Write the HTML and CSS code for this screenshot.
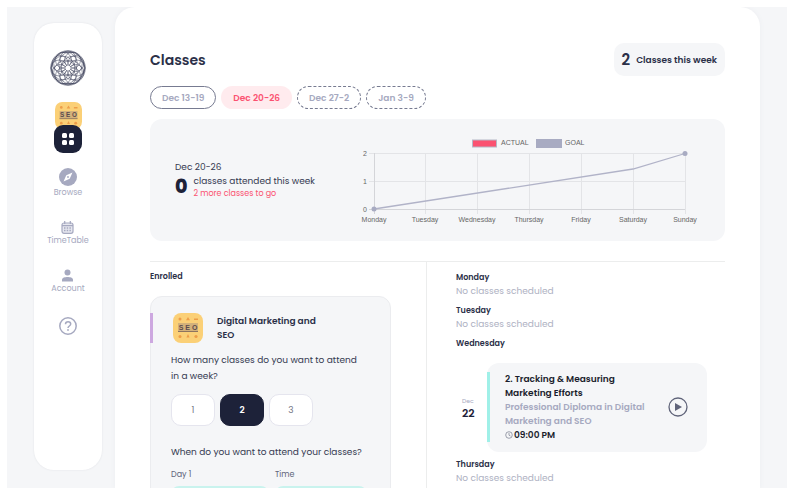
FILE: index.html
```html
<!DOCTYPE html>
<html lang="en">
<head>
<meta charset="utf-8">
<meta name="viewport" content="width=device-width, initial-scale=1">
<title>Classes</title>
<link rel="stylesheet" href="styles.css">
</head>
<body>
<svg class="defs" aria-hidden="true">
  <symbol id="seo" viewBox="0 0 30 30">
    <rect width="30" height="30" rx="8" fill="#fbd077"/>
    <g fill="#ed9d49"><circle cx="7" cy="6" r="1.5"/><path d="M15 4l2 3.2h-4zM21 5.500h4v1.600h-4z"/><circle cx="7" cy="23.500" r="1.500"/><path d="M15 21l1.600 3.500h-3.200z"/><circle cx="23" cy="23.500" r="1.600"/></g>
    <rect x="5" y="10" width="20" height="8.500" fill="#d3b17a"/>
    <path d="M5 18.500h20" stroke="#8d7460"/>
  </symbol>
</svg>
<div class="app">
  <nav class="sidebar" aria-label="Main">
    <svg class="logo" viewBox="-18 -18 36 36" role="img" aria-label="Home">
      <g fill="none" stroke="#343852" stroke-width=".5">
        <circle r="17.300"/><circle r="16.300"/>
        <circle cx="9" cy="0" r="8"/><circle cx="7.800" cy="4.500" r="8"/><circle cx="4.500" cy="7.800" r="8"/><circle cx="0" cy="9" r="8"/><circle cx="-4.500" cy="7.800" r="8"/><circle cx="-7.800" cy="4.500" r="8"/><circle cx="-9" cy="0" r="8"/><circle cx="-7.800" cy="-4.500" r="8"/><circle cx="-4.500" cy="-7.800" r="8"/><circle cx="0" cy="-9" r="8"/><circle cx="4.500" cy="-7.800" r="8"/><circle cx="7.800" cy="-4.500" r="8"/>
        <circle cx="5" cy="0" r="11.800"/><circle cx="2.500" cy="4.300" r="11.800"/><circle cx="-2.500" cy="4.300" r="11.800"/><circle cx="-5" cy="0" r="11.800"/><circle cx="-2.500" cy="-4.300" r="11.800"/><circle cx="2.500" cy="-4.300" r="11.800"/>
      </g>
      <circle r="2.500" fill="#fff"/>
    </svg>
    <a class="course" href="#" aria-label="SEO course"><svg viewBox="0 0 30 30"><use href="#seo"/><text x="15" y="17" text-anchor="middle" class="seo-text">S E O</text></svg></a>
    <a class="home" href="#" aria-label="Dashboard">
      <svg viewBox="0 0 12 12" fill="#fff"><rect x="0" y="0" width="5" height="5" rx="1.500"/><rect x="7" y="0" width="5" height="5" rx="1.500"/><rect x="0" y="7" width="5" height="5" rx="1.500"/><rect x="7" y="7" width="5" height="5" rx="1.500"/></svg>
    </a>
    <div class="links">
      <a href="#">
        <svg class="icon-large" viewBox="0 0 18 18"><circle cx="9" cy="9" r="9" fill="#a6a9c0"/><path d="M13.500 4.500L10.700 10.700 4.500 13.500 7.300 7.300z" fill="#fff"/><circle cx="9" cy="9" r=".9" fill="#a6a9c0"/></svg>
        <span>Browse</span>
      </a>
      <a href="#">
        <svg class="icon-small" viewBox="0 0 13 13" fill="none" stroke="#a6a9c0" stroke-width="1.200"><rect x="1" y="2" width="11" height="10.300" rx="2" fill="#e6e7ef"/><path d="M1 4.700h11M3.700 0v3M9.300 0v3"/><path d="M3 7h7M3 9.600h7" stroke-width="1.500" stroke-dasharray="1.500 1.200"/></svg>
        <span>TimeTable</span>
      </a>
      <a href="#">
        <svg class="icon-small" viewBox="0 0 13 13" fill="#a6a9c0"><circle cx="6.500" cy="3.500" r="3"/><path d="M1 12.500v-1.700C1 8.700 4 8 6.500 8s5.500.7 5.500 2.800v1.700z"/></svg>
        <span>Account</span>
      </a>
      <a href="#" aria-label="Help">
        <svg class="icon-large" viewBox="0 0 18 18" fill="none" stroke="#a6a9c0" stroke-width="1.500"><circle cx="9" cy="9" r="8.200"/><path d="M6.500 7.200C6.500 3.800 11.700 4 11.700 7c0 2-2.700 2-2.700 4"/><circle cx="9" cy="13" r=".9" fill="#a6a9c0" stroke="none"/></svg>
      </a>
    </div>
  </nav>

  <main class="main">
    <header class="header">
      <h1>Classes</h1>
      <div class="summary"><strong>2</strong><span>Classes this week</span></div>
    </header>
    <div class="weeks">
      <button class="week past">Dec 13-19</button>
      <button class="week current">Dec 20-26</button>
      <button class="week">Dec 27-2</button>
      <button class="week">Jan 3-9</button>
    </div>

    <section class="progress">
      <div class="attendance">
        <p>Dec 20-26</p>
        <div class="count">
          <strong>0</strong>
          <div><p>classes attended this week</p><p class="remaining">2 more classes to go</p></div>
        </div>
      </div>
      <svg class="chart" viewBox="0 0 350 100" role="img" aria-label="Actual and goal classes by day">
        <rect x="116.500" y="10" width="24" height="7" fill="#fb5271" stroke="#b5b7c6"/>
        <text x="145" y="15">ACTUAL</text>
        <rect x="180" y="9" width="26" height="9" fill="#a8abc2"/>
        <text x="209" y="15">GOAL</text>
        <path d="M13 23.500H329M13 51.500H329M69.500 23v61M121.500 23v61M173.500 23v61M225.500 23v61M277.500 23v61M329.500 23v61" stroke="#e3e4e7" fill="none"/>
        <path d="M13 79.500H329M18.500 23v61" stroke="#d4d5d9" fill="none"/>
        <path d="M18 79L277 39 329 23.500" stroke="#b1b3c8" stroke-width="1.300" fill="none"/>
        <circle cx="18" cy="79" r="2.500" fill="#a8abc2"/><circle cx="329" cy="23.500" r="2.500" fill="#a8abc2"/>
        <g text-anchor="end"><text x="11" y="26">2</text><text x="11" y="54">1</text><text x="11" y="82">0</text></g>
        <g text-anchor="middle"><text x="18" y="92">Monday</text><text x="69" y="92">Tuesday</text><text x="121" y="92">Wednesday</text><text x="173" y="92">Thursday</text><text x="225" y="92">Friday</text><text x="277" y="92">Saturday</text><text x="329" y="92">Sunday</text></g>
      </svg>
    </section>

    <div class="columns">
      <section class="enrolled">
        <h2>Enrolled</h2>
        <article class="enrolment">
          <div class="course-title">
            <svg viewBox="0 0 30 30" aria-hidden="true"><use href="#seo"/><text x="15" y="17" text-anchor="middle" class="seo-text">S E O</text></svg>
            <h3>Digital Marketing and SEO</h3>
          </div>
          <p class="question">How many classes do you want to attend in a week?</p>
          <div class="amounts"><button>1</button><button class="selected">2</button><button>3</button></div>
          <p class="question">When do you want to attend your classes?</p>
          <div class="slots">
            <div><label for="day">Day 1</label><select id="day"><option></option></select></div>
            <div><label for="time">Time</label><select id="time"><option></option></select></div>
          </div>
        </article>
      </section>
      <section class="schedule">
        <div class="day"><h2>Monday</h2><p>No classes scheduled</p></div>
        <div class="day"><h2>Tuesday</h2><p>No classes scheduled</p></div>
        <div class="day"><h2>Wednesday</h2>
          <div class="event">
            <div class="date"><span>Dec</span><strong>22</strong></div>
            <article class="lesson">
              <div class="lesson-text">
                <h3>2. Tracking &amp; Measuring Marketing Efforts</h3>
                <p>Professional Diploma in Digital Marketing and SEO</p>
                <div class="time"><svg viewBox="0 0 8 8" fill="none" stroke="#777b8d" stroke-width=".7"><circle cx="4" cy="4" r="3.300"/><path d="M4 2v2.200l1.500.8"/></svg><time>09:00 PM</time></div>
              </div>
              <button class="play" aria-label="Play class"><svg viewBox="0 0 20 20"><circle cx="10" cy="10" r="9" fill="none" stroke="#60647a" stroke-width="1.300"/><path d="M7 6v8l7-4z" fill="#60647a"/></svg></button>
            </article>
          </div>
        </div>
        <div class="day"><h2>Thursday</h2><p>No classes scheduled</p></div>
      </section>
    </div>
  </main>
</div>
</body>
</html>
```
FILE: styles.css
```css
* { box-sizing: border-box; }
body {
  margin: 0;
  height: 100vh;
  padding: 7px 3px 4px 7px;
  overflow: hidden;
  background: #fff;
  color: #343950;
  font: 9px/14px Poppins, Inter, "Open Sans", sans-serif;
}
h1, h2, h3, p { margin: 0; }
h1, h2, h3, .summary { color: #2b3048; }
h2 { font-size: 8px; line-height: 14px; font-weight: 600; }
h3 { font-size: 9px; line-height: 14px; font-weight: 600; }
button, select { font: inherit; color: inherit; }
button { padding: 0; cursor: pointer; }
a { color: inherit; text-decoration: none; }
svg { display: block; }
.defs { position: absolute; width: 0; height: 0; }
.seo-text { font: 700 7px "Liberation Sans", sans-serif; fill: #5c4b4d; }
.app {
  display: flex;
  gap: 13px;
  height: 100%;
  padding: 0 27px;
  overflow: hidden;
  background: #f5f6f8;
}
.sidebar {
  display: flex;
  flex: 0 0 68px;
  flex-direction: column;
  align-items: center;
  margin: 16px 0 18px;
  padding-top: 27px;
  border-radius: 20px;
  background: #fff;
  box-shadow: 0 0 2px #dfe0e5;
}
.logo { width: 36px; height: 36px; margin-bottom: 16px; }
.course svg { width: 27px; height: 27px; }
.home {
  display: grid;
  place-items: center;
  width: 28px;
  height: 28px;
  margin: -4px 0 15px;
  border-radius: 9px;
  background: #1d2239;
}
.home svg { width: 12px; height: 12px; }
.links { display: flex; flex-direction: column; gap: 23px; }
.links a {
  display: flex;
  flex-direction: column;
  align-items: center;
  gap: 1px;
  color: #a6a9c0;
  font-size: 8px;
  line-height: 11px;
}
.icon-large { width: 18px; height: 18px; }
.icon-small { width: 13px; height: 13px; }
.main {
  flex: 1;
  min-width: 0;
  padding: 36px 35px 0;
  border-radius: 20px 20px 0 0;
  background: #fff;
  box-shadow: 0 0 5px #eceef1;
}
.header { display: flex; align-items: center; justify-content: space-between; }
h1 { font-size: 14px; line-height: 20px; font-weight: 600; }
.summary {
  display: flex;
  align-items: center;
  gap: 6px;
  height: 33px;
  padding: 0 8px;
  border-radius: 10px;
  background: #f5f6f8;
  font-weight: 600;
}
.summary strong { font-size: 15px; font-weight: 600; }
.weeks { display: flex; gap: 5px; margin: 10px 0; }
.week {
  height: 23px;
  padding: 0 11px;
  border: 1px dashed #777b91;
  border-radius: 12px;
  background: #fff;
  color: #a6a9c0;
  font-weight: 600;
}
.past { border-style: solid; }
.current { border-color: #ffebee; background: #ffebee; color: #fb5271; }
.progress {
  display: flex;
  align-items: center;
  min-height: 122px;
  padding: 0 19px 0 25px;
  border-radius: 12px;
  background: #f5f6f8;
}
.attendance { flex: 0 0 181px; }
.count { display: flex; align-items: center; gap: 6px; }
.count strong { font-size: 19px; line-height: 24px; font-weight: 800; color: #1d2239; }
.remaining { font-size: 8px; line-height: 12px; color: #fb5271; }
.chart { flex: 1; min-width: 0; }
.chart text { font: 7px "Liberation Sans", Arial, sans-serif; fill: #666; }
.columns {
  display: grid;
  grid-template-columns: 277fr 298fr;
  margin-top: 20px;
  border-top: 1px solid #eceded;
}
.enrolled { padding: 8px 35px 0 0; border-right: 1px solid #eceded; }
.enrolment {
  margin-top: 12px;
  padding: 16px 19px 16px 20px;
  border: 1px solid #ebecef;
  border-radius: 12px;
  background: #f5f6f8;
  line-height: 16px;
}
.course-title {
  display: flex;
  align-items: center;
  gap: 14px;
  margin: 0 0 9px -21px;
  padding-left: 20px;
  border-left: 3px solid #cda8e0;
}
.course-title svg { width: 30px; height: 30px; }
.course-title h3 { max-width: 112px; }
.question { max-width: 195px; }
.amounts { display: flex; gap: 5px; margin: 10px 0 18px; }
.amounts button {
  width: 44px;
  height: 32px;
  border: 1px solid #e5e5ee;
  border-radius: 10px;
  background: #fff;
  color: #777a87;
}
.amounts .selected { border-color: #1d2239; background: #1d2239; color: #fff; font-weight: 600; }
.slots { display: grid; grid-template-columns: 98fr 92fr; gap: 6px; margin-top: 8px; padding-right: 4px; }
.slots label { display: block; font-size: 8px; line-height: 14px; color: #60647a; }
.slots select {
  display: block;
  width: 100%;
  height: 28px;
  margin-top: 4px;
  appearance: none;
  border: 2px solid #c9f3ee;
  border-radius: 8px;
  background: #fff;
}
.schedule { padding: 9px 18px 0 29px; }
.day { margin-bottom: 6px; }
.day > p { line-height: 13px; color: #aeb1c2; }
.event { display: flex; align-items: center; margin-top: 12px; }
.date { display: flex; flex: 0 0 31px; flex-direction: column; padding-left: 6px; }
.date span { font-size: 6px; line-height: 10px; color: #a6a9c0; }
.date strong { font-size: 11px; font-weight: 600; color: #1d2239; }
.lesson {
  display: flex;
  flex: 1;
  align-items: center;
  justify-content: space-between;
  padding: 9px 19px 10px 0;
  border-radius: 12px;
  background: #f5f6f8;
}
.lesson-text {
  flex: 0 0 170px;
  padding-left: 15px;
  border-left: 3px solid #a0f0e8;
  font-weight: 600;
  color: #a6a9c0;
}
.lesson h3, .time { color: #1a1d2c; }
.lesson h3 { max-width: 130px; }
.time { display: flex; align-items: center; gap: 1px; }
.time svg { width: 8px; height: 8px; }
.play { border: 0; background: none; }
.play svg { width: 20px; height: 20px; }
```
